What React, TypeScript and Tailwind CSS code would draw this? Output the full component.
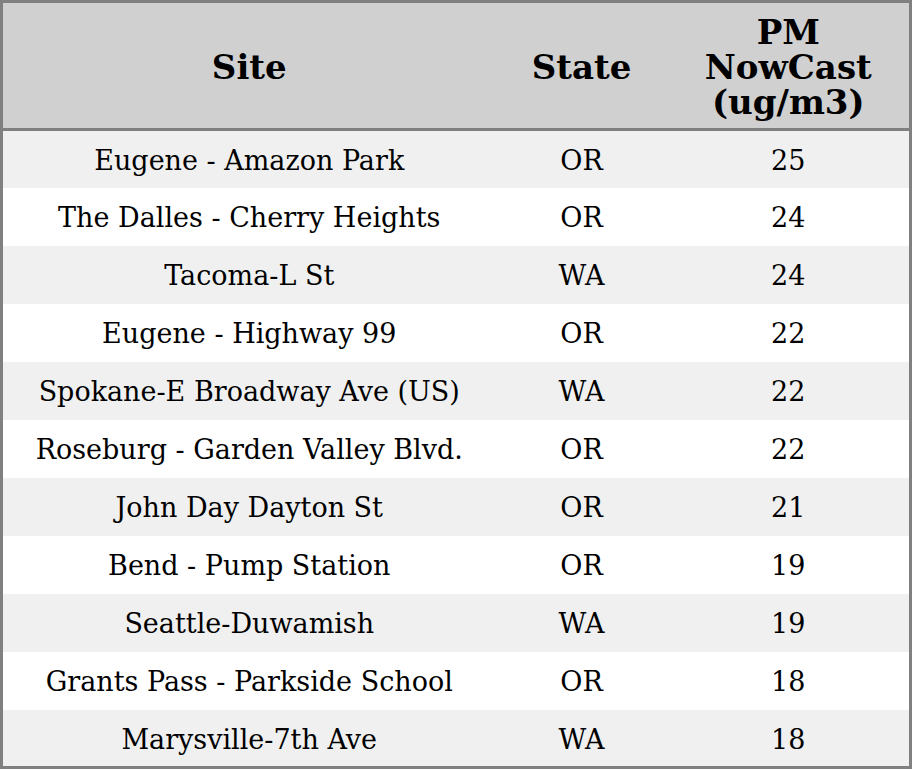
import React from 'react';

interface Row {
  site: string;
  state: string;
  pm: number;
}

const rows: Row[] = [
  { site: 'Eugene - Amazon Park', state: 'OR', pm: 25 },
  { site: 'The Dalles - Cherry Heights', state: 'OR', pm: 24 },
  { site: 'Tacoma-L St', state: 'WA', pm: 24 },
  { site: 'Eugene - Highway 99', state: 'OR', pm: 22 },
  { site: 'Spokane-E Broadway Ave (US)', state: 'WA', pm: 22 },
  { site: 'Roseburg - Garden Valley Blvd.', state: 'OR', pm: 22 },
  { site: 'John Day Dayton St', state: 'OR', pm: 21 },
  { site: 'Bend - Pump Station', state: 'OR', pm: 19 },
  { site: 'Seattle-Duwamish', state: 'WA', pm: 19 },
  { site: 'Grants Pass - Parkside School', state: 'OR', pm: 18 },
  { site: 'Marysville-7th Ave', state: 'WA', pm: 18 },
];

export default function App() {
  return (
    <div className="w-[912px] h-[769px] bg-white font-['DejaVu_Serif',serif] text-black">
      <table className="w-full border-[3px] border-[#808080] border-collapse">
        <thead>
          <tr className="bg-[#d0d0d0] h-[128px] border-b-[3px] border-[#808080]">
            <th className="w-[494px] pt-[3px] text-[34px] leading-[35px] font-bold">Site</th>
            <th className="w-[172px] pt-[3px] text-[34px] leading-[35px] font-bold">State</th>
            <th className="pt-[3px] text-[34px] leading-[35px] font-bold px-6">PM NowCast (ug/m3)</th>
          </tr>
        </thead>
        <tbody>
          {rows.map((r, i) => (
            <tr key={i} className={i % 2 === 0 ? 'bg-[#f0f0f0] h-[58px]' : 'bg-white h-[58px]'}>
              <td className="pt-1 text-center text-[27px]">{r.site}</td>
              <td className="pt-1 text-center text-[27px]">{r.state}</td>
              <td className="pt-1 text-center text-[27px]">{r.pm}</td>
            </tr>
          ))}
        </tbody>
      </table>
    </div>
  );
}
